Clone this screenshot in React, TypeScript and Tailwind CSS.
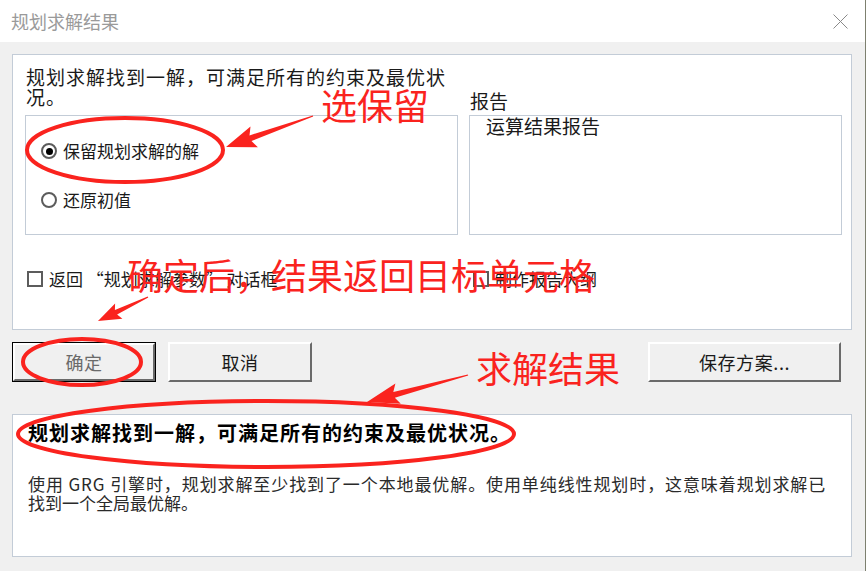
import React from 'react';

const RED = '#fa231e';

// tapered arrow: thin tail, wide head at (x2, y2)
function arrowPoints(x1: number, y1: number, x2: number, y2: number, headLen: number, headW: number, shaftW: number) {
  const len = Math.hypot(x2 - x1, y2 - y1);
  const dx = (x2 - x1) / len;
  const dy = (y2 - y1) / len;
  const nx = -dy;
  const ny = dx;
  const bx = x2 - dx * headLen;
  const by = y2 - dy * headLen;
  const wx = x2 - dx * headLen * 1.15;
  const wy = y2 - dy * headLen * 1.15;
  const pts = [
    [x1 + nx * 0.6, y1 + ny * 0.6],
    [bx + (nx * shaftW) / 2, by + (ny * shaftW) / 2],
    [wx + (nx * headW) / 2, wy + (ny * headW) / 2],
    [x2, y2],
    [wx - (nx * headW) / 2, wy - (ny * headW) / 2],
    [bx - (nx * shaftW) / 2, by - (ny * shaftW) / 2],
    [x1 - nx * 0.6, y1 - ny * 0.6],
  ];
  return pts.map((p) => p.map((v) => v.toFixed(1)).join(',')).join(' ');
}

function Radio({ checked, label }: { checked?: boolean; label: string }) {
  return (
    <div className="flex items-center h-5 gap-[6px]">
      <span className="w-4 h-4 rounded-full border-2 border-[#5c5c5c] bg-white flex items-center justify-center">
        {checked && <span className="w-[7px] h-[7px] rounded-full bg-black" />}
      </span>
      <span className="text-[17px] leading-5 text-[#1a1a1a]">{label}</span>
    </div>
  );
}

function Check({ label }: { label: string }) {
  return (
    <div className="flex items-center h-5 gap-[6px]">
      <span className="w-4 h-4 border-2 border-[#5c5c5c] bg-white" />
      <span className="text-[17px] leading-5 text-[#1a1a1a]">{label}</span>
    </div>
  );
}

function Button({ label, def, w, muted }: { label: string; def?: boolean; w: string; muted?: boolean }) {
  return (
    <div className={`${w} h-[40px] ${def ? 'border border-black' : ''}`}>
      <div className="w-full h-full border-t-2 border-l-2 border-t-white border-l-white border-b-2 border-r-2 border-b-[#6a6a6a] border-r-[#6a6a6a] bg-[#f0f0f0] flex items-center justify-center">
        <span className={`text-[18px] leading-5 tracking-[0.6px] ${muted ? 'text-[#6a6a6a]' : 'text-[#1a1a1a]'}`}>{label}</span>
      </div>
    </div>
  );
}

export default function App() {
  return (
    <div className="relative w-[866px] h-[571px] overflow-hidden bg-[#f0f0f0] border-r border-r-[#7d806f] font-['Noto_Sans_CJK_SC',sans-serif]">
      {/* title bar */}
      <div className="h-[42px] bg-white flex items-center justify-between pl-[11px] pr-[17px]">
        <span className="text-[18px] leading-none text-[#9a9a9a]">规划求解结果</span>
        <svg width="15" height="15" viewBox="0 0 15 15">
          <path d="M0.5 0.5 L14.5 14.5 M14.5 0.5 L0.5 14.5" stroke="#8a8a8a" strokeWidth="1" />
        </svg>
      </div>

      <div className="pl-[12px] pr-[13px] pt-[12px]">
        {/* options panel */}
        <div className="w-[840px] h-[276px] bg-white border border-[#c3ccd7] pl-[12px] pr-[9px] pt-[12px]">
          <div className="flex items-end gap-[11px]">
            <div className="w-[433px]">
              <p className="pl-[1px] text-[19px] leading-5 tracking-[1px] text-[#1a1a1a]">
                规划求解找到一解，可满足所有的约束及最优状
                <br />
                况。
              </p>
              <div className="mt-[8px] h-[120px] border border-[#c3ccd7] pl-[15px] pt-[25px] flex flex-col gap-[29px]">
                <Radio checked label="保留规划求解的解" />
                <Radio label="还原初值" />
              </div>
            </div>
            <div className="w-[373px]">
              <div className="text-[19px] leading-5 text-[#1a1a1a] pl-[1px]">报告</div>
              <div className="mt-[4px] h-[120px] border border-[#c3ccd7] pl-[16px]">
                <div className="text-[19px] leading-5 text-[#1a1a1a]">运算结果报告</div>
              </div>
            </div>
          </div>
          <div className="mt-[34px] flex">
            <div className="w-[446px] pl-[2px]">
              <Check label="返回 “规划求解参数” 对话框" />
            </div>
            <div className="pl-[2px]">
              <Check label="制作报告大纲" />
            </div>
          </div>
        </div>

        {/* buttons */}
        <div className="mt-[12px] flex items-center gap-[12px] pr-[11px]">
          <Button label="确定" def muted w="w-[144px]" />
          <Button label="取消" w="w-[144px]" />
          <div className="ml-auto">
            <Button label="保存方案..." w="w-[193px]" />
          </div>
        </div>

        {/* result panel */}
        <div className="mt-[32px] w-[840px] h-[143px] bg-white border border-[#c3ccd7] pl-[15px] pt-[8px]">
          <p className="text-[20px] leading-5 font-bold tracking-[1px] text-black">
            规划求解找到一解，可满足所有的约束及最优状况。
          </p>
          <p className="mt-[31px] text-[17px] leading-[19px] text-[#2a2a2a]">
            <span className="tracking-[0.9px]">使用 GRG 引擎时，规划求解至少找到了一个本地最优解。使用单纯线性规划时，这意味着规划求解已</span>
            <br />
            找到一个全局最优解。
          </p>
        </div>
      </div>

      {/* red annotations */}
      <svg className="absolute inset-0 pointer-events-none" width="866" height="571">
        <g fill="none" stroke={RED} strokeWidth="4">
          <ellipse cx="125" cy="150" rx="98" ry="32" />
          <ellipse cx="82" cy="362" rx="59" ry="23" />
          <ellipse cx="266" cy="434" rx="248" ry="33" />
        </g>
        <g fill={RED}>
          <polygon points={arrowPoints(313, 116, 226, 147, 26, 22, 6)} />
          <polygon points={arrowPoints(148, 297, 98, 321, 20, 17, 5)} />
          <polygon points={arrowPoints(468, 375, 367, 402, 28, 21, 6)} />
        </g>
      </svg>
      <div className="absolute left-[321px] top-[86px] text-[36px] leading-none text-[#fa231e]">选保留</div>
      <div className="absolute left-[127px] top-[256px] text-[36px] leading-none text-[#fa231e]">确定后，结果返回目标单元格</div>
      <div className="absolute left-[476px] top-[349px] text-[36px] leading-none text-[#fa231e]">求解结果</div>
    </div>
  );
}
